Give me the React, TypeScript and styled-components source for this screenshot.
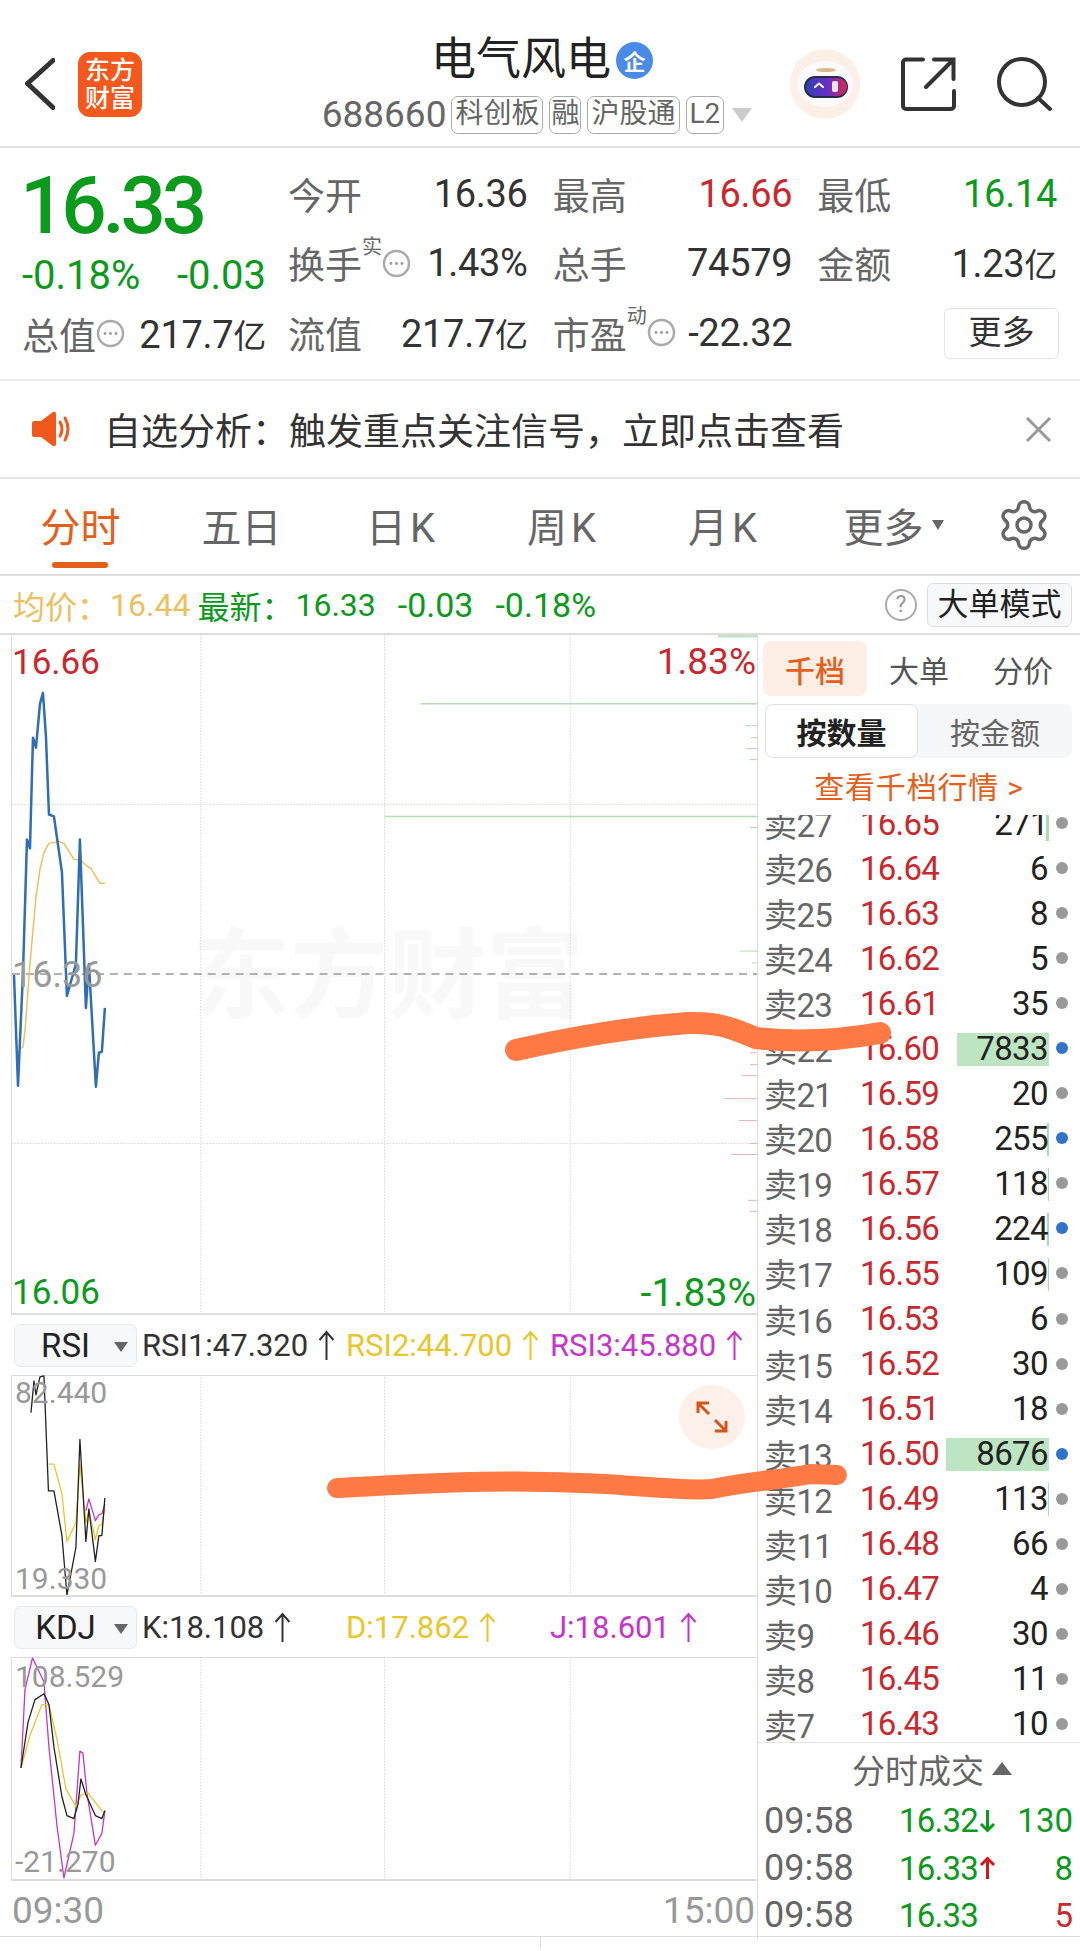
import React from "react";
import styled, { createGlobalStyle } from "styled-components";
import { Settings } from "lucide-react";

const GREEN = "#0b9a1c";
const RED = "#c9282e";
const ORANGE = "#e4601a";
const YELLOW = "#e8c62c";
const PURPLE = "#c535c9";

const GlobalStyle = createGlobalStyle`
  html, body {
    margin: 0;
    padding: 0;
    background: #fff;
  }
  * {
    box-sizing: border-box;
  }
  body {
    font-family: Roboto, "Noto Sans CJK SC", sans-serif;
    color: #333;
  }
`;

const Page = styled.div`
  position: relative;
  width: 1080px;
  height: 1951px;
  overflow: hidden;
  background: #fff;
`;

/* header */
const Header = styled.header`
  display: grid;
  grid-template-columns: 300px 1fr 300px;
  height: 148px;
  border-bottom: 2px solid #e2e2e2;
`;

const HeaderLeft = styled.div`
  display: flex;
  align-items: center;
  padding: 38px 0 0 25px;
  gap: 23px;
  height: 130px;
`;

const Logo = styled.div`
  width: 64px;
  height: 65px;
  border-radius: 12px;
  background: #f4581c;
  color: #fff;
  font-size: 25px;
  line-height: 28px;
  font-weight: 500;
  text-align: center;
  padding-top: 5px;
`;

const HeaderCenter = styled.div`
  display: flex;
  flex-direction: column;
  align-items: center;
  padding-top: 37px;
`;

const TitleRow = styled.div`
  display: flex;
  align-items: center;
  gap: 5px;
  height: 46px;
  margin-left: 4px;
`;

const Title = styled.div`
  font-size: 45px;
  line-height: 46px;
  color: #222;
`;

const CorpBadge = styled.div`
  width: 37px;
  height: 37px;
  border-radius: 50%;
  background: #4a8be8;
  color: #fff;
  font-size: 22px;
  font-weight: 700;
  display: flex;
  align-items: center;
  justify-content: center;
`;

const SubRow = styled.div`
  display: flex;
  align-items: center;
  gap: 6px;
  margin: 13px 6px 0 0;
`;

const Code = styled.span`
  font-size: 37px;
  line-height: 38px;
  color: #666;
  margin-right: -1px;
`;

const Tag = styled.span<{ $tight?: boolean }>`
  height: 38px;
  padding: 0 ${(p) => (p.$tight ? 1 : 3)}px;
  border: 1.5px solid #aaa;
  border-radius: 7px;
  font-size: 28px;
  line-height: 34px;
  color: #666;
`;

const DownCaret = styled.span`
  width: 0;
  height: 0;
  margin-left: 2px;
  border-left: 10px solid transparent;
  border-right: 10px solid transparent;
  border-top: 14px solid #ccc;
`;

const HeaderRight = styled.div`
  display: flex;
  align-items: center;
  justify-content: flex-end;
  padding: 38px 27px 0 0;
  height: 130px;
  gap: 41px;
`;

/* stats */
const Stats = styled.section`
  display: flex;
  height: 233px;
  padding: 11px 23px 0 22px;
  gap: 22px;
  border-bottom: 2px solid #eee;
`;

const StatsLeft = styled.div`
  flex: 0 0 244px;
`;

const BigPrice = styled.div`
  height: 93px;
  margin-left: -2px;
  font-size: 80px;
  line-height: 95px;
  font-weight: 500;
  letter-spacing: -4.2px;
  color: ${GREEN};
`;

const ChangeRow = styled.div`
  display: flex;
  justify-content: space-between;
  align-items: center;
  height: 47px;
  font-size: 40px;
  color: ${GREEN};
`;

const StatsGrid = styled.div`
  flex: 1;
  display: grid;
  grid-template-columns: repeat(3, 1fr);
  grid-auto-rows: 69.6px;
  column-gap: 25px;
`;

const StatCell = styled.div`
  display: flex;
  align-items: center;
  height: 69.6px;
  font-size: 38px;
  color: #333;
`;

const StatLabel = styled.span`
  font-size: 37px;
  color: #666;
`;

const Sup = styled.span`
  font-size: 20px;
  line-height: 20px;
  color: #666;
  align-self: flex-start;
  margin-top: 8px;
`;

const StatValue = styled.span<{ $color?: string }>`
  margin-left: auto;
  color: ${(p) => p.$color || "#333"};
  letter-spacing: -0.3px;
`;

const Unit = styled.span`
  font-size: 33px;
`;

const MoreButton = styled.div`
  width: 115px;
  height: 51px;
  margin: 10px -2px 0 auto;
  border: 1.5px solid #e4e4e4;
  border-radius: 6px;
  font-size: 33px;
  line-height: 47px;
  text-align: center;
  color: #333;
`;

/* notice */
const Notice = styled.div`
  display: flex;
  align-items: center;
  height: 98px;
  padding: 0 28px 0 31px;
  border-bottom: 2px solid #e6e6e6;
`;

const NoticeText = styled.div`
  flex: 1;
  margin-left: 30px;
  font-size: 37px;
  color: #333;
  white-space: nowrap;
`;

/* tabs */
const Tabs = styled.nav`
  display: flex;
  align-items: center;
  height: 97px;
  border-bottom: 2px solid #ddd;
`;

const Tab = styled.div<{ $active?: boolean; $spaced?: boolean; $shift?: number }>`
  position: relative;
  flex: 0 0 161px;
  height: 95px;
  display: flex;
  align-items: center;
  justify-content: center;
  padding-bottom: 3px;
  padding-left: ${(p) => p.$shift || 0}px;
  font-size: 40px;
  letter-spacing: ${(p) => (p.$spaced ? "4px" : "0")};
  color: ${(p) => (p.$active ? ORANGE : "#666")};

  ${(p) =>
    p.$active &&
    `&::after {
      content: "";
      position: absolute;
      left: 52px;
      bottom: 6px;
      width: 56px;
      height: 6px;
      border-radius: 3px;
      background: ${ORANGE};
    }`}
`;

const TabCaret = styled.span`
  width: 0;
  height: 0;
  margin-left: 8px;
  border-left: 6px solid transparent;
  border-right: 6px solid transparent;
  border-top: 10px solid #666;
`;

const GearWrap = styled.div`
  margin-left: 30px;
  padding-bottom: 3px;
  color: #666;
  display: flex;
`;

/* info row */
const InfoRow = styled.div`
  display: flex;
  align-items: center;
  height: 59px;
  padding: 0 8px 0 13px;
  border-bottom: 2px solid #ddd;
  font-size: 32px;
`;

const InfoText = styled.span<{ $color: string; $gap?: number; $size?: number }>`
  color: ${(p) => p.$color};
  margin-right: ${(p) => p.$gap ?? 0}px;
  font-size: ${(p) => p.$size || 32}px;
`;

const HelpMark = styled.span`
  width: 32px;
  height: 32px;
  margin-left: auto;
  border: 2px solid #aaa;
  border-radius: 50%;
  color: #999;
  font-size: 23px;
  line-height: 28px;
  text-align: center;
`;

const ModeButton = styled.div`
  width: 145px;
  height: 44px;
  margin-left: 10px;
  border: 1.5px solid #ddd;
  border-radius: 6px;
  background: #f7f8fa;
  font-size: 31px;
  line-height: 41px;
  text-align: center;
  color: #222;
`;

/* main area */
const Main = styled.main`
  display: grid;
  grid-template-columns: 757px 1fr;
  height: 1302px;
  border-bottom: 1px solid #ddd;
`;

const ChartColumn = styled.div`
  padding-left: 11px;
  display: flex;
  flex-direction: column;
`;

const ChartFrame = styled.div<{ $h: number }>`
  position: relative;
  height: ${(p) => p.$h}px;
  flex: 0 0 auto;
  border-left: 1.5px solid #ddd;
  border-bottom: 2px solid #ddd;
`;

const ChartSvg = styled.svg`
  position: absolute;
  inset: 0;
  width: 100%;
  height: 100%;
`;

const Watermark = styled.div`
  position: absolute;
  left: 180px;
  top: 282px;
  font-size: 98px;
  line-height: 120px;
  font-weight: 700;
  color: #f8f8f8;
  white-space: nowrap;
`;

const ChartLabel = styled.span<{ $top: number; $right?: boolean; $color: string; $size?: number; $left?: number }>`
  position: absolute;
  top: ${(p) => p.$top}px;
  ${(p) => (p.$right ? "right: 1px;" : `left: ${p.$left ?? 0}px;`)}
  font-size: ${(p) => p.$size || 35}px;
  line-height: 40px;
  color: ${(p) => p.$color};
`;

const ExpandButton = styled.div`
  position: absolute;
  left: 667px;
  top: 10px;
  width: 66px;
  height: 64px;
  border-radius: 50%;
  background: #fdf0e8;
  display: flex;
  align-items: center;
  justify-content: center;
`;

const IndicatorHead = styled.div`
  display: flex;
  align-items: center;
  flex: 0 0 60px;
  padding-left: 3px;
`;

const IndicatorSelect = styled.div`
  display: flex;
  align-items: center;
  justify-content: center;
  width: 123px;
  height: 43px;
  margin-right: 5px;
  padding-right: 20px;
  position: relative;
  border: 1px solid #e8e8e8;
  border-radius: 7px;
  background: #f7f8fa;
  font-size: 33px;
  color: #222;

  &::after {
    content: "";
    position: absolute;
    right: 8px;
    top: 17px;
    border-left: 7px solid transparent;
    border-right: 7px solid transparent;
    border-top: 10px solid #666;
  }
`;

const IndicatorValue = styled.div<{ $color: string }>`
  flex: 0 0 204px;
  display: flex;
  align-items: center;
  gap: 10px;
  font-size: 31px;
  color: ${(p) => p.$color};
  white-space: nowrap;
`;

const TimeAxis = styled.div`
  display: flex;
  justify-content: space-between;
  align-items: center;
  flex: 1;
  padding: 0 2px 0 1px;
  font-size: 37px;
  color: #999;
`;

/* order book */
const BookColumn = styled.aside`
  display: flex;
  flex-direction: column;
  border-left: 1.5px solid #ddd;
  min-width: 0;
`;

const BookTabs = styled.div`
  display: flex;
  padding: 6px 0 0 5px;
  height: 67px;
`;

const BookTab = styled.div<{ $active?: boolean }>`
  flex: 0 0 104px;
  height: 55px;
  border-radius: 8px;
  display: flex;
  align-items: center;
  justify-content: center;
  font-size: 30px;
  font-weight: ${(p) => (p.$active ? 500 : 400)};
  color: ${(p) => (p.$active ? ORANGE : "#555")};
  background: ${(p) => (p.$active ? "#fdeee6" : "transparent")};
`;

const Segment = styled.div`
  display: flex;
  height: 54px;
  margin: 2px 8px 0 7px;
  border-radius: 8px;
  background: #f6f7f9;
`;

const SegmentItem = styled.div<{ $active?: boolean }>`
  flex: ${(p) => (p.$active ? "0 0 153px" : "1")};
  display: flex;
  align-items: center;
  justify-content: center;
  font-size: 30px;
  border-radius: 8px;
  font-weight: ${(p) => (p.$active ? 700 : 400)};
  color: ${(p) => (p.$active ? "#222" : "#666")};
  background: ${(p) => (p.$active ? "#fff" : "transparent")};
  border: ${(p) => (p.$active ? "1.5px solid #e2e2e2" : "none")};
`;

const BookLink = styled.div`
  height: 57px;
  display: flex;
  align-items: center;
  justify-content: center;
  padding-bottom: 4px;
  font-size: 30px;
  letter-spacing: 0.8px;
  color: ${ORANGE};
`;

const BookList = styled.div`
  flex: 0 0 928px;
  overflow: hidden;
  border-bottom: 1.5px solid #e4e4e4;
`;

const BookInner = styled.div`
  margin-top: -16px;
`;

const BookRow = styled.div`
  display: grid;
  grid-template-columns: 72px 103px 109px 12px;
  align-items: center;
  height: 45.05px;
  padding-left: 6px;
  font-size: 33px;
`;

const Side = styled.span`
  color: #666;
  white-space: nowrap;
  letter-spacing: -0.6px;
`;

const RowPrice = styled.span`
  color: ${RED};
  text-align: right;
  letter-spacing: -0.8px;
`;

const Qty = styled.span`
  position: relative;
  display: block;
  text-align: right;
  color: #222;
  letter-spacing: -0.6px;
`;

const QtyText = styled.span`
  position: relative;
`;

const QtyBar = styled.span<{ $w: number }>`
  position: absolute;
  right: -1px;
  top: 4px;
  bottom: 2px;
  width: ${(p) => p.$w}px;
  background: ${(p) => (p.$w > 10 ? "#bde5c2" : "#a9dcb1")};
`;

const Dot = styled.span<{ $on?: boolean }>`
  width: 12px;
  height: 12px;
  margin-left: 8px;
  border-radius: 50%;
  background: ${(p) => (p.$on ? "#2f74c9" : "#999")};
`;

const TradeHead = styled.div`
  display: flex;
  align-items: center;
  justify-content: center;
  height: 54px;
  padding: 0 0 3px 26px;
  gap: 8px;
  font-size: 33px;
  color: #666;
`;

const UpCaret = styled.span`
  border-left: 10px solid transparent;
  border-right: 10px solid transparent;
  border-top: none;
  border-bottom: 13px solid #666;
`;

const TradeRow = styled.div`
  display: grid;
  grid-template-columns: 135px 80px 20px 1fr;
  align-items: center;
  height: 47.4px;
  padding: 0 7px 0 6px;
  font-size: 33px;
`;

const TradeTime = styled.span`
  color: #666;
  font-size: 36px;
  white-space: nowrap;
`;

const TradePrice = styled.span`
  color: ${GREEN};
  letter-spacing: -0.8px;
`;

const TradeVol = styled.span<{ $color: string }>`
  color: ${(p) => p.$color};
  text-align: right;
`;

const BottomBar = styled.div`
  display: flex;
  justify-content: center;
  height: 12px;
`;

const BottomDivider = styled.span`
  width: 1px;
  background: #ddd;
`;

const ScribbleLayer = styled.svg`
  position: absolute;
  left: 0;
  top: 0;
  width: 1080px;
  height: 1951px;
  pointer-events: none;
`;

/* icons */
const BackIcon = () => (
  <svg width="30" height="52" viewBox="0 0 30 52" style={{ flex: "none" }}>
    <path d="M28 2.5 2.5 25.5 28 49.5" fill="none" stroke="#333" strokeWidth="5" strokeLinecap="round" strokeLinejoin="round" />
  </svg>
);

const ShareIcon = () => (
  <svg width="55" height="55" viewBox="0 0 55 55">
    <path
      d="M22 2.5H5a3 3 0 0 0-3 3V49a3 3 0 0 0 3 3H50a3 3 0 0 0 3-3V34M33 2.5H52.5V22M52 3 25 30"
      fill="none"
      stroke="#333"
      strokeWidth="4"
      strokeLinecap="round"
    />
  </svg>
);

const SearchIcon = () => (
  <svg width="56" height="56" viewBox="0 0 56 56">
    <circle cx="25" cy="26" r="23" fill="none" stroke="#333" strokeWidth="4" />
    <path d="M41 42 53 53" stroke="#333" strokeWidth="4" strokeLinecap="round" />
  </svg>
);

const RobotAvatar = () => (
  <svg width="70" height="70" viewBox="0 0 70 70" style={{ flex: "none" }}>
    <defs>
      <linearGradient id="visor" x1="0" x2="1" y1="0" y2="0">
        <stop offset="0" stopColor="#3540b8" />
        <stop offset="0.55" stopColor="#6a2fc4" />
        <stop offset="1" stopColor="#d62a52" />
      </linearGradient>
    </defs>
    <circle cx="35" cy="35" r="35" fill="#fcefe8" />
    <path d="M8 14q2 8 8 10M62 14q-2 8-8 10" fill="none" stroke="#f4f1ee" strokeWidth="4" strokeLinecap="round" />
    <ellipse cx="35" cy="35" rx="28" ry="23" fill="#fafafa" />
    <ellipse cx="36" cy="21" rx="10" ry="2" fill="#dcb98e" />
    <rect x="14" y="27" width="44" height="22" rx="11" fill="#2a2a4a" />
    <rect x="16" y="29" width="41" height="18" rx="9" fill="url(#visor)" />
    <path d="M25 38l4-3.5 4 3.5" fill="none" stroke="#fff" strokeWidth="2" strokeLinecap="round" />
    <rect x="42" y="32" width="6" height="11" rx="2" fill="#fbe4ea" />
  </svg>
);

const DotsIcon = () => (
  <svg width="29" height="29" viewBox="0 0 29 29" style={{ flex: "none" }}>
    <circle cx="14.5" cy="14.5" r="12.5" fill="none" stroke="#aaa" strokeWidth="2.5" />
    <circle cx="9" cy="14.5" r="1.4" fill="#999" />
    <circle cx="14.5" cy="14.5" r="1.4" fill="#999" />
    <circle cx="20" cy="14.5" r="1.4" fill="#999" />
  </svg>
);

const SpeakerIcon = () => (
  <svg width="43" height="36" viewBox="0 0 43 36" style={{ flex: "none" }}>
    <path d="M1 12q0-2 2-2h7L22 1q3-1 3 2v30q0 3-3 2L10 26H3q-2 0-2-2z" fill="#f0581c" />
    <path d="M29 11q4 7 0 14M34 7q6 11 0 22" fill="none" stroke="#f0581c" strokeWidth="3" strokeLinecap="round" />
  </svg>
);

const CloseIcon = () => (
  <svg width="27" height="27" viewBox="0 0 27 27" style={{ flex: "none" }}>
    <path d="M2 2 25 25M25 2 2 25" stroke="#999" strokeWidth="3" />
  </svg>
);

const ExpandIcon = () => (
  <svg width="34" height="34" viewBox="0 0 34 34">
    <path d="M3 13V3h11M3 3l11 11M31 21v10H20M31 31 20 20" fill="none" stroke="#d5561c" strokeWidth="3" />
  </svg>
);

const ThinArrow = ({ color }: { color: string }) => (
  <svg width="17" height="30" viewBox="0 0 17 30" style={{ flex: "none" }}>
    <path d="M8.5 30V2M1.5 10l7-8 7 8" fill="none" stroke={color} strokeWidth="2" />
  </svg>
);

const TickArrow = ({ color, down }: { color: string; down?: boolean }) => (
  <svg width="17" height="24" viewBox="0 0 17 24" style={{ transform: down ? "rotate(180deg)" : undefined }}>
    <path d="M8.5 23V3M2 9l6.5-6.5L15 9" fill="none" stroke={color} strokeWidth="3" />
  </svg>
);

const Line = ({ pts, color, w }: { pts: string; color: string; w: number }) => (
  <polyline points={pts} fill="none" stroke={color} strokeWidth={w} strokeLinejoin="round" />
);

const GridLines = ({ top, bottom, rows }: { top: number; bottom: number; rows?: number[] }) => (
  <g stroke="#d8d8d8" strokeWidth="1" strokeDasharray="1.5 1.5">
    {[200, 384, 570].map((x) => (
      <line key={x} x1={x} x2={x} y1={top} y2={bottom} />
    ))}
    {(rows || []).map((y) => (
      <line key={y} x1={11} x2={757} y1={y} y2={y} />
    ))}
  </g>
);

/* data */
const BOOK: [number, string, string, number?, boolean?][] = [
  [27, "16.65", "271", 3],
  [26, "16.64", "6"],
  [25, "16.63", "8"],
  [24, "16.62", "5"],
  [23, "16.61", "35"],
  [22, "16.60", "7833", 92, true],
  [21, "16.59", "20"],
  [20, "16.58", "255", 2, true],
  [19, "16.57", "118", 1],
  [18, "16.56", "224", 2, true],
  [17, "16.55", "109", 1],
  [16, "16.53", "6"],
  [15, "16.52", "30"],
  [14, "16.51", "18"],
  [13, "16.50", "8676", 103, true],
  [12, "16.49", "113", 1],
  [11, "16.48", "66"],
  [10, "16.47", "4"],
  [9, "16.46", "30"],
  [8, "16.45", "11"],
  [7, "16.43", "10"],
];

const GREEN_TICKS: [number, number][] = [
  [726, 745], [738, 751], [749, 746], [760, 750], [828, 750], [952, 740], [964, 752],
];
const RED_TICKS: [number, number][] = [
  [1054, 750], [1066, 750], [1077, 742], [1100, 724], [1122, 739], [1145, 750], [1156, 731], [1202, 748], [1213, 750],
];

const App = () => {
  return (
    <Page>
      <GlobalStyle />
      <Header>
        <HeaderLeft>
          <BackIcon />
          <Logo>
            东方
            <br />
            财富
          </Logo>
        </HeaderLeft>
        <HeaderCenter>
          <TitleRow>
            <Title>电气风电</Title>
            <CorpBadge>企</CorpBadge>
          </TitleRow>
          <SubRow>
            <Code>688660</Code>
            <Tag>科创板</Tag>
            <Tag $tight>融</Tag>
            <Tag>沪股通</Tag>
            <Tag>L2</Tag>
            <DownCaret />
          </SubRow>
        </HeaderCenter>
        <HeaderRight>
          <RobotAvatar />
          <ShareIcon />
          <SearchIcon />
        </HeaderRight>
      </Header>

      <Stats>
        <StatsLeft>
          <BigPrice>16.33</BigPrice>
          <ChangeRow>
            <span>-0.18%</span>
            <span>-0.03</span>
          </ChangeRow>
          <StatCell>
            <StatLabel>总值</StatLabel>
            <DotsIcon />
            <StatValue>
              217.7<Unit>亿</Unit>
            </StatValue>
          </StatCell>
        </StatsLeft>
        <StatsGrid>
          <StatCell>
            <StatLabel>今开</StatLabel>
            <StatValue>16.36</StatValue>
          </StatCell>
          <StatCell>
            <StatLabel>最高</StatLabel>
            <StatValue $color={RED}>16.66</StatValue>
          </StatCell>
          <StatCell>
            <StatLabel>最低</StatLabel>
            <StatValue $color={GREEN}>16.14</StatValue>
          </StatCell>
          <StatCell>
            <StatLabel>换手</StatLabel>
            <Sup>实</Sup>
            <DotsIcon />
            <StatValue>1.43%</StatValue>
          </StatCell>
          <StatCell>
            <StatLabel>总手</StatLabel>
            <StatValue>74579</StatValue>
          </StatCell>
          <StatCell>
            <StatLabel>金额</StatLabel>
            <StatValue>
              1.23<Unit>亿</Unit>
            </StatValue>
          </StatCell>
          <StatCell>
            <StatLabel>流值</StatLabel>
            <StatValue>
              217.7<Unit>亿</Unit>
            </StatValue>
          </StatCell>
          <StatCell>
            <StatLabel>市盈</StatLabel>
            <Sup>动</Sup>
            <DotsIcon />
            <StatValue>-22.32</StatValue>
          </StatCell>
          <MoreButton>更多</MoreButton>
        </StatsGrid>
      </Stats>

      <Notice>
        <SpeakerIcon />
        <NoticeText>自选分析：触发重点关注信号，立即点击查看</NoticeText>
        <CloseIcon />
      </Notice>

      <Tabs>
        <Tab $active>分时</Tab>
        <Tab>五日</Tab>
        <Tab $spaced>日K</Tab>
        <Tab $spaced>周K</Tab>
        <Tab $spaced>月K</Tab>
        <Tab $shift={16}>
          更多
          <TabCaret />
        </Tab>
        <GearWrap>
          <Settings size={56} strokeWidth={1.5} />
        </GearWrap>
      </Tabs>

      <InfoRow>
        <InfoText $color="#ecc05e" $gap={1}>均价：</InfoText>
        <InfoText $color="#ecc05e" $gap={7}>
          16.44
        </InfoText>
        <InfoText $color={GREEN} $gap={2}>最新：</InfoText>
        <InfoText $color={GREEN} $gap={22}>
          16.33
        </InfoText>
        <InfoText $color={GREEN} $gap={22} $size={34}>
          -0.03
        </InfoText>
        <InfoText $color={GREEN} $size={34}>-0.18%</InfoText>
        <HelpMark>?</HelpMark>
        <ModeButton>大单模式</ModeButton>
      </InfoRow>

      <Main>
        <ChartColumn>
          <ChartFrame $h={680}>
            <Watermark>东方财富</Watermark>
            <ChartSvg viewBox="11 635 746 680" preserveAspectRatio="none">
              <GridLines top={635} bottom={1314} rows={[805, 1145]} />
              <line x1="11" x2="757" y1="975" y2="975" stroke="#999" strokeWidth="1.5" strokeDasharray="8 6" />
              <path d="M718 636H757" stroke="#bfe3c4" strokeWidth="3" />
              <path d="M420 704H757M384 817H757" stroke="#b5dcb9" strokeWidth="1.5" />
              {GREEN_TICKS.map(([y, x]) => (
                <line key={y} x1={x} x2={757} y1={y} y2={y} stroke="#a9d8af" strokeWidth="1" />
              ))}
              {RED_TICKS.map(([y, x]) => (
                <line key={y} x1={x} x2={757} y1={y} y2={y} stroke="#e6b4b6" strokeWidth="1" />
              ))}
              <Line
                w={1.5}
                color="#ecc05e"
                pts="19,1050 22,1048 24,1032 29,965 35,898 39,870 43,853 48,844 58,842 63,844 73,860 80,861 85,866 90,869 99,884 104,884"
              />
              <Line
                w={2.5}
                color="#2f6db5"
                pts="13,976 17,1087 22,974 26,840 29,849 32,738 35,748 39,704 42,693 45,737 48,815 53,817 61,873 66,997 75,965 79,840 85,1009 88,965 95,1088 98,1054 101,1053 104,1009"
              />
            </ChartSvg>
            <ChartLabel $top={8} $color={RED}>16.66</ChartLabel>
            <ChartLabel $top={7} $right $size={37} $color={RED}>1.83%</ChartLabel>
            <ChartLabel $top={320} $color="#999" $size={36}>16.36</ChartLabel>
            <ChartLabel $top={638} $color={GREEN}>16.06</ChartLabel>
            <ChartLabel $top={638} $right $size={39} $color={GREEN}>-1.83%</ChartLabel>
          </ChartFrame>

          <IndicatorHead>
            <IndicatorSelect>RSI</IndicatorSelect>
            <IndicatorValue $color="#333">
              RSI1:47.320
              <ThinArrow color="#333" />
            </IndicatorValue>
            <IndicatorValue $color={YELLOW}>
              RSI2:44.700
              <ThinArrow color={YELLOW} />
            </IndicatorValue>
            <IndicatorValue $color={PURPLE}>
              RSI3:45.880
              <ThinArrow color={PURPLE} />
            </IndicatorValue>
          </IndicatorHead>
          <ChartFrame $h={222}>
            <ChartSvg viewBox="11 1375 746 222" preserveAspectRatio="none">
              <line x1="11" x2="757" y1="1375.5" y2="1375.5" stroke="#ddd" strokeWidth="1" />
              <GridLines top={1375} bottom={1597} />
              <Line w={1.3} color="#c535c9" pts="85,1512 88,1500 94.5,1522 98,1516 101,1515 104,1505" />
              <Line
                w={1.3}
                color="#e8c62c"
                pts="47.5,1465 53,1465 61,1495 66,1543 75,1524 79,1465 85,1524 88,1512 94.5,1541 98,1527 101,1526 104,1510"
              />
              <Line
                w={1.3}
                color="#222"
                pts="30,1413 33,1381 35,1395 39,1377 43,1376 47.5,1492 53,1492 61,1537 66,1597 75,1549 79,1440 85,1543 88,1510 94.5,1563 98,1537 101,1537 104,1499"
              />
            </ChartSvg>
            <ChartLabel $top={-2} $left={3} $size={30} $color="#999">82.440</ChartLabel>
            <ChartLabel $top={184} $left={3} $size={30} $color="#999">19.330</ChartLabel>
            <ExpandButton>
              <ExpandIcon />
            </ExpandButton>
          </ChartFrame>

          <IndicatorHead>
            <IndicatorSelect>KDJ</IndicatorSelect>
            <IndicatorValue $color="#333">
              K:18.108
              <ThinArrow color="#333" />
            </IndicatorValue>
            <IndicatorValue $color={YELLOW}>
              D:17.862
              <ThinArrow color={YELLOW} />
            </IndicatorValue>
            <IndicatorValue $color={PURPLE}>
              J:18.601
              <ThinArrow color={PURPLE} />
            </IndicatorValue>
          </IndicatorHead>
          <ChartFrame $h={224}>
            <ChartSvg viewBox="11 1657 746 224" preserveAspectRatio="none">
              <line x1="11" x2="757" y1="1657.5" y2="1657.5" stroke="#ddd" strokeWidth="1" />
              <GridLines top={1657} bottom={1880} />
              <Line
                w={1.3}
                color="#c535c9"
                pts="20,1769 24,1690 31.5,1658 43,1682 48,1748 56,1827 63,1880 73,1835 79,1752 82,1754 86,1794 94.5,1847 101,1835 104,1812"
              />
              <Line
                w={1.3}
                color="#e8c62c"
                pts="20,1769 29,1736 41,1705 48,1705 56,1740 65,1790 75,1808 80,1796 87,1794 94.5,1804 103,1814"
              />
              <Line
                w={1.3}
                color="#222"
                pts="20,1769 27,1723 34,1700 43,1694 48,1705 53,1748 61,1798 66,1817 73,1820 77,1806 80,1780 85,1796 94.5,1817 101,1820 104,1812"
              />
            </ChartSvg>
            <ChartLabel $top={0} $left={3} $size={30} $color="#999">108.529</ChartLabel>
            <ChartLabel $top={185} $left={3} $size={30} $color="#999">-21.270</ChartLabel>
          </ChartFrame>
          <TimeAxis>
            <span>09:30</span>
            <span>15:00</span>
          </TimeAxis>
        </ChartColumn>

        <BookColumn>
          <BookTabs>
            <BookTab $active>千档</BookTab>
            <BookTab>大单</BookTab>
            <BookTab>分价</BookTab>
          </BookTabs>
          <Segment>
            <SegmentItem $active>按数量</SegmentItem>
            <SegmentItem>按金额</SegmentItem>
          </Segment>
          <BookLink>查看千档行情 &gt;</BookLink>
          <BookList>
            <BookInner>
              {BOOK.map(([level, price, qty, bar, on]) => (
                <BookRow key={level}>
                  <Side>卖{level}</Side>
                  <RowPrice>{price}</RowPrice>
                  <Qty>
                    {bar ? <QtyBar $w={bar} /> : null}
                    <QtyText>{qty}</QtyText>
                  </Qty>
                  <Dot $on={on} />
                </BookRow>
              ))}
            </BookInner>
          </BookList>
          <TradeHead>
            分时成交
            <UpCaret />
          </TradeHead>
          <TradeRow>
            <TradeTime>09:58</TradeTime>
            <TradePrice>16.32</TradePrice>
            <TickArrow color={GREEN} down />
            <TradeVol $color={GREEN}>130</TradeVol>
          </TradeRow>
          <TradeRow>
            <TradeTime>09:58</TradeTime>
            <TradePrice>16.33</TradePrice>
            <TickArrow color="#d01818" />
            <TradeVol $color={GREEN}>8</TradeVol>
          </TradeRow>
          <TradeRow>
            <TradeTime>09:58</TradeTime>
            <TradePrice>16.33</TradePrice>
            <span />
            <TradeVol $color={RED}>5</TradeVol>
          </TradeRow>
        </BookColumn>
      </Main>
      <BottomBar>
        <BottomDivider />
      </BottomBar>

      <ScribbleLayer viewBox="0 0 1080 1951">
        <path
          d="M516 1050C560 1040 620 1028 688 1023C722 1022 735 1030 756 1038C790 1042 830 1042 880 1033"
          fill="none"
          stroke="#ff7a45"
          strokeWidth="22"
          strokeLinecap="round"
        />
        <path
          d="M337 1488C420 1484 500 1478 606 1484C650 1487 690 1491 712 1489C750 1481 780 1480 810 1474L837 1475"
          fill="none"
          stroke="#ff7a45"
          strokeWidth="20"
          strokeLinecap="round"
        />
      </ScribbleLayer>
    </Page>
  );
};

export default App;
